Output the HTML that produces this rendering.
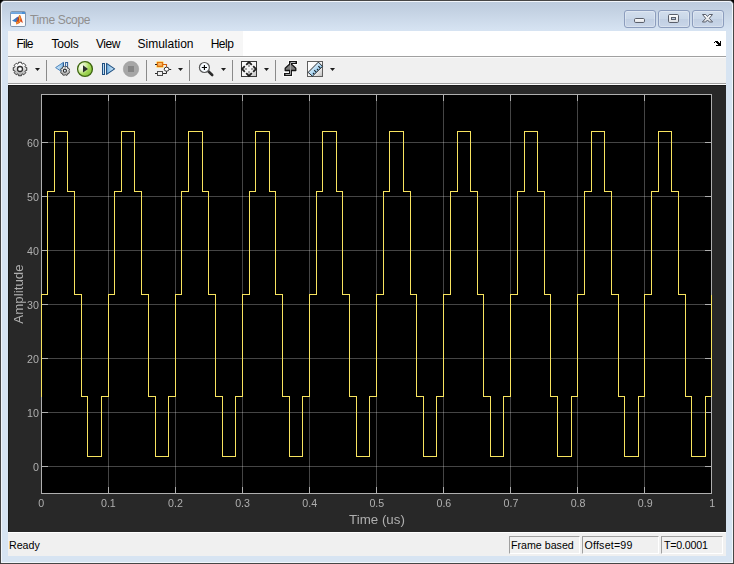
<!DOCTYPE html>
<html lang="en">
<head>
<meta charset="utf-8">
<title>Time Scope</title>
<style>
html,body{margin:0;padding:0;background:#000;}
body{width:734px;height:564px;position:relative;overflow:hidden;font-family:"Liberation Sans",sans-serif;}
.abs{position:absolute;}
#win{position:absolute;left:0;top:0;width:732px;height:562px;border:1px solid #464646;border-radius:5px 5px 1px 1px;
 background:#d7e4f2;overflow:hidden;}
#hl{position:absolute;left:0;top:0;width:730px;height:560px;border:1px solid #f2f6fb;border-radius:4px 4px 0 0;}
#titlebar{position:absolute;left:0;top:0;width:732px;height:30px;background:linear-gradient(#bccbdd 0px,#c4d2e3 10px,#d6e3f2 29px);}
#title{position:absolute;left:29px;top:12px;font-size:12px;line-height:14px;color:#8f8f8f;white-space:nowrap;letter-spacing:-0.35px;}
.cap{position:absolute;top:9px;width:30px;height:16px;border:1px solid #8c9dbd;border-radius:3px;
 background:linear-gradient(#d2deed,#c9d7e8 48%,#c1cfe3 52%,#c9d6e8);box-shadow:inset 0 0 0 1px rgba(255,255,255,.3);}
#menubar{position:absolute;left:7px;top:30px;width:718px;height:25px;background:#fff;}
#menubg{position:absolute;left:0;top:0;width:235px;height:25px;background:#f6f6f6;}
.mi{position:absolute;top:6px;font-size:12px;line-height:14px;color:#000;white-space:nowrap;}
#mline{position:absolute;left:7px;top:55px;width:718px;height:1px;background:#a0a0a0;}
#toolbar{position:absolute;left:7px;top:56px;width:718px;height:26px;background:linear-gradient(#fbfbfb 0,#fbfbfb 1px,#f0f0f0 1px);}
#tline1{position:absolute;left:7px;top:83px;width:718px;height:1px;background:#fff;}
#tline2{position:absolute;left:7px;top:82px;width:718px;height:1px;background:#a0a0a0;}
#panel{position:absolute;left:7px;top:84px;width:718px;height:447px;background:#282828;box-shadow:inset 1px 1px 0 #1b1b1b;}
#status{position:absolute;left:7px;top:531px;width:718px;height:24px;background:linear-gradient(#fff 0,#fff 1px,#f0f0f0 1px);}
.sb{position:absolute;top:4px;height:16px;border:1px solid;border-color:#a0a0a0 #fff #fff #a0a0a0;font-size:10.67px;line-height:16px;color:#000;padding-left:2px;white-space:nowrap;box-sizing:content-box;}
#ready{position:absolute;left:1px;top:7px;font-size:10.67px;line-height:13px;color:#000;}
.sep{position:absolute;top:3px;width:1px;height:21px;background:#a8a8a8;}
.dd{position:absolute;top:12px;width:0;height:0;border-left:3px solid transparent;border-right:3px solid transparent;border-top:3px solid #333;}
svg.plot{position:absolute;left:0;top:0;will-change:transform;}
svg.ico{position:absolute;overflow:visible;}
</style>
</head>
<body>
<div id="win">
 <div id="titlebar"></div>
 <div id="hl"></div>
 <!-- app icon -->
 <svg class="ico" style="left:9px;top:10px" width="16" height="16" viewBox="10 11 16 16">
  <rect x="10.5" y="11.5" width="15" height="15" rx="1.3" fill="#fbfbfb" stroke="#8296ae"/>
  <rect x="11" y="12" width="14" height="2" fill="#4a8fd6"/>
  <rect x="11" y="12.6" width="11" height="0.7" fill="#d6e8f8" opacity="0.8"/>
  <path d="M12 20.7 L15.2 18.6 L17.6 16.8 L18.4 18 L16.4 22.2 L14.6 21.7 Z" fill="#3d7cc2"/>
  <path d="M15.6 18.4 L17.6 16.8 L18.4 18 L17 20.5 Z" fill="#5a5a9a" opacity="0.6"/>
  <path d="M19.4 15 L20.4 15.6 L21.5 18.6 L22.9 22.8 L21.8 22.4 L20.8 21.2 L19.6 23 L16.6 24.5 L15.8 22.8 L16.4 21.6 L18 18.4 Z" fill="#d8481c"/>
  <path d="M19.4 15 L20.2 15.7 L20.6 18.6 L20.2 21.4 L18.6 23.2 L19 18.4 Z" fill="#f29a28"/>
  <path d="M19.5 15.6 L20 16 L20.1 18.6 L19.6 19.6 Z" fill="#fbe04a"/>
  <path d="M16.6 24.5 L16 23.1 L17.4 21.4 L18.6 22.3 Z" fill="#f3a032"/>
  <path d="M18.4 17 L19.4 15 L18.9 19.4 L17.2 22 Z" fill="#b0301e" opacity="0.8"/>
 </svg>
 <div id="title">Time Scope</div>
 <!-- caption buttons -->
 <div class="cap" style="left:623px">
  <svg class="ico" style="left:0;top:0" width="30" height="16" viewBox="625 11 30 16"><rect x="634.5" y="18.5" width="10" height="4" rx="1.2" fill="url(#cg)" stroke="#5a5f6b"/></svg>
 </div>
 <div class="cap" style="left:657px">
  <svg class="ico" style="left:0;top:0" width="30" height="16" viewBox="659 11 30 16"><rect x="668.5" y="14.5" width="10" height="8" rx="1.2" fill="url(#cg)" stroke="#5a5f6b"/><rect x="671.5" y="17.5" width="4" height="2" fill="#b9c7dc" stroke="#5a5f6b"/></svg>
 </div>
 <div class="cap" style="left:691px">
  <svg class="ico" style="left:0;top:0" width="30" height="16" viewBox="693 11 30 16"><defs><linearGradient id="cg" x1="0" y1="0" x2="0" y2="1"><stop offset="0" stop-color="#ffffff"/><stop offset="1" stop-color="#dcdfe4"/></linearGradient></defs><path d="M702.5 14.5 L705.8 14.5 L707.5 16.5 L709.2 14.5 L712.5 14.5 L709.3 18.3 L712.6 22 L709.3 22 L707.5 20 L705.7 22 L702.4 22 L705.7 18.3 Z" fill="url(#cg)" stroke="#5a5f6b" stroke-width="1" stroke-linejoin="round"/></svg>
 </div>

 <div id="menubar">
  <div id="menubg"></div>
  <div class="mi" style="left:8.6px;letter-spacing:-0.8px">File</div>
  <div class="mi" style="left:43.5px;letter-spacing:-0.2px">Tools</div>
  <div class="mi" style="left:88px;letter-spacing:-0.5px">View</div>
  <div class="mi" style="left:129.5px">Simulation</div>
  <div class="mi" style="left:202.7px;letter-spacing:-0.5px">Help</div>
  <svg class="ico" style="left:0;top:0" width="718" height="25" viewBox="8 31 718 25" shape-rendering="crispEdges"><path d="M715 41h3v1h-3z M720 41h1v2h-1z M714 42h1v1h-1z M716 42h3v1h-3z M717 43h4v1h-4z M718 44h3v1h-3z M716 45h5v1h-5z" fill="#000"/></svg>
 </div>
 <div id="mline"></div>
 <div id="toolbar">
  <svg class="ico" style="left:0;top:0" width="718" height="26" viewBox="8 57 718 26">
<defs>
<linearGradient id="gG" x1="0" y1="0" x2="0" y2="1"><stop offset="0.15" stop-color="#ffffff"/><stop offset="1" stop-color="#a2a2a2"/></linearGradient>
<linearGradient id="gP" x1="0" y1="0" x2="1" y2="1"><stop offset="0.1" stop-color="#e6f6c4"/><stop offset="0.5" stop-color="#aede62"/><stop offset="1" stop-color="#7cbc30"/></linearGradient>
<linearGradient id="gB" x1="0" y1="0" x2="1" y2="0"><stop offset="0" stop-color="#6fb0e2"/><stop offset="1" stop-color="#dceefb"/></linearGradient>
<linearGradient id="gB2" x1="0" y1="0" x2="1" y2="0"><stop offset="0" stop-color="#d4e9fa"/><stop offset="1" stop-color="#8cbfe8"/></linearGradient>
<linearGradient id="gS" x1="0" y1="0" x2="1" y2="1"><stop offset="0" stop-color="#ffffff"/><stop offset="0.6" stop-color="#f4f4f4"/><stop offset="1" stop-color="#bdbdbd"/></linearGradient>
<linearGradient id="gO" x1="0" y1="0" x2="0" y2="1"><stop offset="0" stop-color="#fbd58c"/><stop offset="1" stop-color="#f0a040"/></linearGradient>
<linearGradient id="gR" x1="0.3" y1="0.3" x2="0.7" y2="0.7"><stop offset="0" stop-color="#e2f1fb"/><stop offset="1" stop-color="#86c4ec"/></linearGradient>
<radialGradient id="gPh" cx="0.28" cy="0.38" r="0.5"><stop offset="0" stop-color="#fff" stop-opacity="0.95"/><stop offset="0.55" stop-color="#fff" stop-opacity="0.45"/><stop offset="1" stop-color="#fff" stop-opacity="0"/></radialGradient>
</defs>
<path d="M25.31 67.21 L26.75 67.55 L26.75 70.45 L25.31 70.79 L25.02 71.49 L25.80 72.74 L23.74 74.80 L22.49 74.02 L21.79 74.31 L21.45 75.75 L18.55 75.75 L18.21 74.31 L17.51 74.02 L16.26 74.80 L14.20 72.74 L14.98 71.49 L14.69 70.79 L13.25 70.45 L13.25 67.55 L14.69 67.21 L14.98 66.51 L14.20 65.26 L16.26 63.20 L17.51 63.98 L18.21 63.69 L18.55 62.25 L21.45 62.25 L21.79 63.69 L22.49 63.98 L23.74 63.20 L25.80 65.26 L25.02 66.51 Z" fill="url(#gG)" stroke="#3a3a3a" stroke-width="1" stroke-linejoin="round"/>
<circle cx="20" cy="69" r="2.5" fill="#fff" stroke="#303030" stroke-width="1.3"/>
<path d="M35 68 L40 68 L37.5 71 Z" fill="#1e1e1e"/>
<rect x="46" y="60" width="1" height="21" fill="#8a8a8a"/>
<path d="M55.6 67.6 L63.4 62.4 L63.4 72.8 Z" fill="url(#gB2)" stroke="#4a84bd" stroke-width="1" stroke-linejoin="round"/>
<path d="M63.4 62.4 V70" stroke="#2a5a92" stroke-width="1.1"/>
<rect x="65.6" y="62.5" width="2" height="6" fill="#eef6fd" stroke="#2f5f98" stroke-width="1"/>
<path d="M68.79 71.14 L69.63 71.71 L68.89 73.51 L67.89 73.33 L67.54 73.68 L67.73 74.68 L65.94 75.42 L65.36 74.59 L64.86 74.59 L64.29 75.43 L62.49 74.69 L62.67 73.69 L62.32 73.34 L61.32 73.53 L60.58 71.74 L61.41 71.16 L61.41 70.66 L60.57 70.09 L61.31 68.29 L62.31 68.47 L62.66 68.12 L62.47 67.12 L64.26 66.38 L64.84 67.21 L65.34 67.21 L65.91 66.37 L67.71 67.11 L67.53 68.11 L67.88 68.46 L68.88 68.27 L69.62 70.06 L68.79 70.64 Z" fill="url(#gG)" stroke="#3a3a3a" stroke-width="0.9" stroke-linejoin="round"/>
<circle cx="64.9" cy="70.7" r="1.55" fill="#dfeaf5" stroke="#2b2b2b" stroke-width="1.1"/>
<circle cx="85" cy="69" r="7.4" fill="url(#gP)" stroke="#3f6712" stroke-width="1.4"/>
<circle cx="85" cy="69" r="6.7" fill="url(#gPh)"/>
<path d="M83 65.2 L88 68.9 L83 72.5 Z" fill="#2b2f2b"/>
<rect x="102.5" y="63.5" width="2" height="11" fill="#b9daf4" stroke="#1f4f80" stroke-width="1"/>
<path d="M106.6 63.4 L114.6 68.9 L106.6 74.4 Z" fill="url(#gB)" stroke="#1f4f80" stroke-width="1.1" stroke-linejoin="round"/>
<circle cx="131" cy="69" r="7.7" fill="#a6a6a6" stroke="#9c9c9c" stroke-width="0.6"/>
<rect x="128" y="66" width="6" height="6" fill="#858585"/>
<rect x="146" y="60" width="1" height="21" fill="#8a8a8a"/>
<rect x="156" y="61" width="8" height="7" rx="1.5" fill="#ffe58a" opacity="0.9"/>
<rect x="157.5" y="62.5" width="5" height="4" fill="url(#gO)" stroke="#e0700f" stroke-width="1.2"/>
<path d="M155 64.5 H157" stroke="#222" stroke-width="1"/>
<path d="M163 64.5 H166.5 V67" fill="none" stroke="#d2600c" stroke-width="1.1"/>
<path d="M155 73.5 H157 M163 73.5 H166.5 V71 M169 69.5 H171.2" fill="none" stroke="#2a2a2a" stroke-width="1"/>
<rect x="157.5" y="71.5" width="5" height="4" fill="#f0f0f0" stroke="#4a4a4a" stroke-width="1"/>
<ellipse cx="166.6" cy="69.2" rx="2.4" ry="2" fill="#fff" stroke="#333" stroke-width="1"/>
<path d="M178 68 L183 68 L180.5 71 Z" fill="#1e1e1e"/>
<rect x="189" y="60" width="1" height="21" fill="#8a8a8a"/>
<path d="M208.3 71.3 L212.2 75" stroke="#2c2c2c" stroke-width="2.6" stroke-linecap="round"/>
<circle cx="204.4" cy="67.5" r="5" fill="#f6fbff" stroke="#5a5a5a" stroke-width="1.2"/>
<path d="M201.8 67.5 H207 M204.4 64.9 V70.1" stroke="#000" stroke-width="1.1"/>
<path d="M221 68 L226 68 L223.5 71 Z" fill="#1e1e1e"/>
<rect x="232" y="60" width="1" height="21" fill="#8a8a8a"/>
<rect x="241.5" y="61.5" width="15" height="15" fill="url(#gS)" stroke="#3a3a3a" stroke-width="1"/>
<path d="M248.25 64.6 h1.5 v2.4 h-1.5 Z M248.25 71 h1.5 v2.4 h-1.5 Z M244.6 68.25 v1.5 h2.4 v-1.5 Z M251 68.25 v1.5 h2.4 v-1.5 Z" fill="#8c8c8c"/>
<path d="M246.2 64.8 L249 62 L251.8 64.8 M246.2 73.2 L249 76 L251.8 73.2 M244.8 66.2 L242 69 L244.8 71.8 M253.2 66.2 L256 69 L253.2 71.8" fill="none" stroke="#202020" stroke-width="1.8" stroke-linejoin="miter"/>
<path d="M264 68 L269 68 L266.5 71 Z" fill="#1e1e1e"/>
<rect x="275" y="60" width="1" height="21" fill="#8a8a8a"/>
<path d="M285.5 74.5 H290.5 V62.5 H295.5" fill="none" stroke="#ffffff" stroke-opacity="0.7" stroke-width="5" stroke-linecap="square" stroke-linejoin="miter"/>
<path d="M285.5 74.5 H290.5 V62.5 H295.5" fill="none" stroke="#161616" stroke-width="3" stroke-linecap="square" stroke-linejoin="miter"/>
<path d="M289 64.6 L292 64.6 L295.8 68.3 V70.5 H285.2 V68.3 Z" fill="#7c7c7c" stroke="#161616" stroke-width="1.3" stroke-linejoin="round"/>
<path d="M285.5 74.5 H290.5 V63 " fill="none" stroke="#a4a4a4" stroke-width="1"/>
<path d="M290.5 62.5 H295.5" fill="none" stroke="#b4b8bc" stroke-width="1"/>
<rect x="307.5" y="61.5" width="15" height="15" fill="url(#gS)" stroke="#5e5e5e" stroke-width="1"/>
<path d="M308.1 72.4 L318.4 62.1 L322.5 66.4 L312.4 76.2 Z" fill="url(#gR)" stroke="#23282e" stroke-width="1" stroke-linejoin="round"/>
<path d="M313 73 l1 1 M314.2 70.2 l1.9 1.9 M317 69 l1 1 M318.3 66.1 l1.9 1.9" stroke="#1c2630" stroke-width="1.1"/>
<path d="M330 68 L335 68 L332.5 71 Z" fill="#1e1e1e"/>
</svg>
 </div>
 <div id="tline1"></div><div id="tline2"></div>
 <div id="panel"></div>
 <div id="status">
  <div id="ready">Ready</div>
  <div class="sb" style="left:501px;width:68px;padding-left:1px">Frame based</div>
  <div class="sb" style="left:574px;width:73.5px;padding-left:1.5px;letter-spacing:0.2px">Offset=99</div>
  <div class="sb" style="left:653px;width:58px;letter-spacing:-0.2px">T=0.0001</div>
 </div>
</div>
<svg class="plot" width="734" height="564" viewBox="0 0 734 564">
<rect x="41" y="94" width="671" height="400" fill="#000"/>
<g stroke="#fff" stroke-opacity="0.27" stroke-width="1" shape-rendering="crispEdges">
<line x1="108.5" y1="95" x2="108.5" y2="493"/>
<line x1="175.5" y1="95" x2="175.5" y2="493"/>
<line x1="242.5" y1="95" x2="242.5" y2="493"/>
<line x1="309.5" y1="95" x2="309.5" y2="493"/>
<line x1="376.5" y1="95" x2="376.5" y2="493"/>
<line x1="443.5" y1="95" x2="443.5" y2="493"/>
<line x1="510.5" y1="95" x2="510.5" y2="493"/>
<line x1="577.5" y1="95" x2="577.5" y2="493"/>
<line x1="644.5" y1="95" x2="644.5" y2="493"/>
<line x1="42" y1="466.5" x2="711" y2="466.5"/>
<line x1="42" y1="412.5" x2="711" y2="412.5"/>
<line x1="42" y1="358.5" x2="711" y2="358.5"/>
<line x1="42" y1="304.5" x2="711" y2="304.5"/>
<line x1="42" y1="250.5" x2="711" y2="250.5"/>
<line x1="42" y1="196.5" x2="711" y2="196.5"/>
<line x1="42" y1="142.5" x2="711" y2="142.5"/>
</g>
<g stroke="#afafaf" stroke-width="1" shape-rendering="crispEdges">
<line x1="108.5" y1="487" x2="108.5" y2="493"/>
<line x1="108.5" y1="95" x2="108.5" y2="101"/>
<line x1="175.5" y1="487" x2="175.5" y2="493"/>
<line x1="175.5" y1="95" x2="175.5" y2="101"/>
<line x1="242.5" y1="487" x2="242.5" y2="493"/>
<line x1="242.5" y1="95" x2="242.5" y2="101"/>
<line x1="309.5" y1="487" x2="309.5" y2="493"/>
<line x1="309.5" y1="95" x2="309.5" y2="101"/>
<line x1="376.5" y1="487" x2="376.5" y2="493"/>
<line x1="376.5" y1="95" x2="376.5" y2="101"/>
<line x1="443.5" y1="487" x2="443.5" y2="493"/>
<line x1="443.5" y1="95" x2="443.5" y2="101"/>
<line x1="510.5" y1="487" x2="510.5" y2="493"/>
<line x1="510.5" y1="95" x2="510.5" y2="101"/>
<line x1="577.5" y1="487" x2="577.5" y2="493"/>
<line x1="577.5" y1="95" x2="577.5" y2="101"/>
<line x1="644.5" y1="487" x2="644.5" y2="493"/>
<line x1="644.5" y1="95" x2="644.5" y2="101"/>
<line x1="42" y1="466.5" x2="48" y2="466.5"/>
<line x1="705" y1="466.5" x2="711" y2="466.5"/>
<line x1="42" y1="412.5" x2="48" y2="412.5"/>
<line x1="705" y1="412.5" x2="711" y2="412.5"/>
<line x1="42" y1="358.5" x2="48" y2="358.5"/>
<line x1="705" y1="358.5" x2="711" y2="358.5"/>
<line x1="42" y1="304.5" x2="48" y2="304.5"/>
<line x1="705" y1="304.5" x2="711" y2="304.5"/>
<line x1="42" y1="250.5" x2="48" y2="250.5"/>
<line x1="705" y1="250.5" x2="711" y2="250.5"/>
<line x1="42" y1="196.5" x2="48" y2="196.5"/>
<line x1="705" y1="196.5" x2="711" y2="196.5"/>
<line x1="42" y1="142.5" x2="48" y2="142.5"/>
<line x1="705" y1="142.5" x2="711" y2="142.5"/>
<rect x="41.5" y="94.5" width="670" height="399" fill="none"/>
</g>
<path d="M41.5 396.5 L41.5 294.5 L47.5 294.5 L47.5 191.5 L54.5 191.5 L54.5 131.5 L61.5 131.5 L67.5 131.5 L67.5 191.5 L74.5 191.5 L74.5 294.5 L81.5 294.5 L81.5 396.5 L87.5 396.5 L87.5 456.5 L94.5 456.5 L101.5 456.5 L101.5 396.5 L108.5 396.5 L108.5 294.5 L114.5 294.5 L114.5 191.5 L121.5 191.5 L121.5 131.5 L128.5 131.5 L134.5 131.5 L134.5 191.5 L141.5 191.5 L141.5 294.5 L148.5 294.5 L148.5 396.5 L155.5 396.5 L155.5 456.5 L161.5 456.5 L168.5 456.5 L168.5 396.5 L175.5 396.5 L175.5 294.5 L181.5 294.5 L181.5 191.5 L188.5 191.5 L188.5 131.5 L195.5 131.5 L202.5 131.5 L202.5 191.5 L208.5 191.5 L208.5 294.5 L215.5 294.5 L215.5 396.5 L222.5 396.5 L222.5 456.5 L228.5 456.5 L235.5 456.5 L235.5 396.5 L242.5 396.5 L242.5 294.5 L249.5 294.5 L249.5 191.5 L255.5 191.5 L255.5 131.5 L262.5 131.5 L269.5 131.5 L269.5 191.5 L275.5 191.5 L275.5 294.5 L282.5 294.5 L282.5 396.5 L289.5 396.5 L289.5 456.5 L295.5 456.5 L302.5 456.5 L302.5 396.5 L309.5 396.5 L309.5 294.5 L316.5 294.5 L316.5 191.5 L322.5 191.5 L322.5 131.5 L329.5 131.5 L336.5 131.5 L336.5 191.5 L342.5 191.5 L342.5 294.5 L349.5 294.5 L349.5 396.5 L356.5 396.5 L356.5 456.5 L363.5 456.5 L369.5 456.5 L369.5 396.5 L376.5 396.5 L376.5 294.5 L383.5 294.5 L383.5 191.5 L389.5 191.5 L389.5 131.5 L396.5 131.5 L403.5 131.5 L403.5 191.5 L410.5 191.5 L410.5 294.5 L416.5 294.5 L416.5 396.5 L423.5 396.5 L423.5 456.5 L430.5 456.5 L436.5 456.5 L436.5 396.5 L443.5 396.5 L443.5 294.5 L450.5 294.5 L450.5 191.5 L457.5 191.5 L457.5 131.5 L463.5 131.5 L470.5 131.5 L470.5 191.5 L477.5 191.5 L477.5 294.5 L483.5 294.5 L483.5 396.5 L490.5 396.5 L490.5 456.5 L497.5 456.5 L503.5 456.5 L503.5 396.5 L510.5 396.5 L510.5 294.5 L517.5 294.5 L517.5 191.5 L524.5 191.5 L524.5 131.5 L530.5 131.5 L537.5 131.5 L537.5 191.5 L544.5 191.5 L544.5 294.5 L550.5 294.5 L550.5 396.5 L557.5 396.5 L557.5 456.5 L564.5 456.5 L571.5 456.5 L571.5 396.5 L577.5 396.5 L577.5 294.5 L584.5 294.5 L584.5 191.5 L591.5 191.5 L591.5 131.5 L597.5 131.5 L604.5 131.5 L604.5 191.5 L611.5 191.5 L611.5 294.5 L618.5 294.5 L618.5 396.5 L624.5 396.5 L624.5 456.5 L631.5 456.5 L638.5 456.5 L638.5 396.5 L644.5 396.5 L644.5 294.5 L651.5 294.5 L651.5 191.5 L658.5 191.5 L658.5 131.5 L665.5 131.5 L671.5 131.5 L671.5 191.5 L678.5 191.5 L678.5 294.5 L685.5 294.5 L685.5 396.5 L691.5 396.5 L691.5 456.5 L698.5 456.5 L705.5 456.5 L705.5 396.5 L711.5 396.5 L711.5 294.5" fill="none" stroke="#f7e35f" stroke-width="1" shape-rendering="crispEdges"/>
<g fill="#afafaf" font-family="'Liberation Sans', sans-serif" font-size="10.67px">
<text x="41.3" y="507" text-anchor="middle">0</text>
<text x="108.4" y="507" text-anchor="middle">0.1</text>
<text x="175.5" y="507" text-anchor="middle">0.2</text>
<text x="242.6" y="507" text-anchor="middle">0.3</text>
<text x="309.7" y="507" text-anchor="middle">0.4</text>
<text x="376.8" y="507" text-anchor="middle">0.5</text>
<text x="443.9" y="507" text-anchor="middle">0.6</text>
<text x="511.0" y="507" text-anchor="middle">0.7</text>
<text x="578.1" y="507" text-anchor="middle">0.8</text>
<text x="645.2" y="507" text-anchor="middle">0.9</text>
<text x="712.3" y="507" text-anchor="middle">1</text>
<text x="38.9" y="470.5" text-anchor="end">0</text>
<text x="38.9" y="416.5" text-anchor="end">10</text>
<text x="38.9" y="362.5" text-anchor="end">20</text>
<text x="38.9" y="308.5" text-anchor="end">30</text>
<text x="38.9" y="254.5" text-anchor="end">40</text>
<text x="38.9" y="200.5" text-anchor="end">50</text>
<text x="38.9" y="146.5" text-anchor="end">60</text>
</g>
<g fill="#afafaf" font-family="'Liberation Sans', sans-serif" font-size="13.33px">
<text x="377" y="524" text-anchor="middle">Time (us)</text>
<text transform="translate(23 294) rotate(-90)" text-anchor="middle">Amplitude</text>
</g>
</svg>
</body>
</html>
